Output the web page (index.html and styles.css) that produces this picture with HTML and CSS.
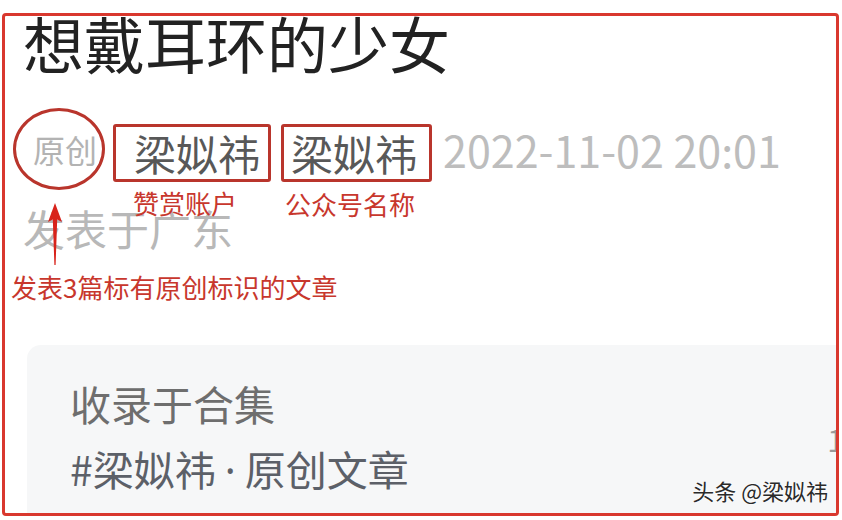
FILE: index.html
```html
<!DOCTYPE html>
<html lang="zh-CN">
<head>
    <meta charset="UTF-8">
    <meta name="viewport" content="width=device-width, initial-scale=1.0">
    <title>想戴耳环的少女</title>
    <link rel="stylesheet" href="styles.css">
</head>
<body>
    <div class="shot">
        <div class="frame">
            <h1 class="title">想戴耳环的少女</h1>

            <div class="meta">
                <span class="original">原创</span>
                <span class="name-box">梁姒祎</span>
                <span class="name-box">梁姒祎</span>
                <span class="date">2022-11-02 20:01</span>
            </div>

            <p class="location">发表于广东</p>
            <p class="note-main">发表3篇标有原创标识的文章</p>

            <!-- annotations drawn over the article -->
            <span class="note note-reward">赞赏账户</span>
            <span class="note note-account">公众号名称</span>
            <svg class="arrow" width="20" height="64" viewBox="0 0 20 64">
                <path d="M10 0 L17 19 L12.2 16.5 L10.6 62 L9.4 62 L7.8 16.5 L3 19 Z" fill="#d8231b"/>
            </svg>

            <div class="album">
                <p class="album-label">收录于合集</p>
                <p class="album-name">#梁姒祎<span class="dot">·</span>原创文章</p>
                <span class="album-count">1</span>
            </div>

            <span class="watermark">头条 @梁姒祎</span>
        </div>
    </div>
</body>
</html>
```

FILE: styles.css
```css
body {
    margin: 0;
    background-color: #fff;
    font-family: "Noto Sans CJK SC", "Noto Sans", sans-serif;
}
p, h1 {
    margin: 0;
}
.shot {
    width: 842px;
    height: 520px;
    padding: 13px 0 0 2px;
    box-sizing: border-box;
    overflow: hidden;
}
.frame {
    position: relative;
    width: 837px;
    height: 503px;
    box-sizing: border-box;
    border: 3px solid #d9382e;
    border-radius: 4px;
    overflow: hidden;
    background-color: #fff;
}
.title {
    height: 60px;
    margin: 0 0 0 18px;
    font-size: 61px;
    line-height: 54px;
    font-weight: normal;
    color: #222;
}
.meta {
    display: flex;
    align-items: center;
    margin: 32px 0 0 8px;
    height: 82px;
}
.original {
    display: flex;
    align-items: center;
    justify-content: center;
    height: 76px;
    width: 74px;
    padding-left: 12px;
    border: 3px solid #b9352c;
    border-radius: 50%;
    font-size: 32px;
    color: #b3b3b3;
}
.name-box {
    display: flex;
    align-items: center;
    justify-content: center;
    height: 52px;
    margin-top: 7px;
    padding: 0 8px 0 18px;
    margin-left: 8px;
    border: 3px solid #b9352c;
    border-radius: 3px;
    font-size: 42px;
    color: #585858;
}
.name-box + .name-box {
    margin-left: 10px;
    padding: 0 12px 0 7px;
}
.date {
    margin-left: 11px;
    font-size: 43px;
    color: #bdbdbd;
}
.location {
    margin: 16px 0 0 18px;
    font-size: 42px;
    line-height: 44px;
    color: #b8b8b8;
}
.note-main {
    margin: 22px 0 0 6px;
    font-size: 26px;
    line-height: 30px;
    color: #c8372d;
}
.note {
    position: absolute;
    font-size: 26px;
    line-height: 28px;
    color: #c8372d;
}
.note-reward {
    left: 128px;
    top: 173px;
}
.note-account {
    left: 280px;
    top: 174px;
}
.arrow {
    position: absolute;
    left: 40px;
    top: 187px;
}
.album {
    position: relative;
    margin: 43px 0 0 22px;
    height: 200px;
    padding: 36px 0 0 43px;
    background-color: #f6f7f8;
    border-radius: 14px 0 0 0;
}
.album-label {
    font-size: 41px;
    line-height: 44px;
    color: #6e6e6e;
}
.album-name {
    margin-top: 21px;
    font-size: 41px;
    line-height: 44px;
    color: #5c6068;
}
.dot {
    font-family: "Noto Sans", sans-serif;
    margin: 0 9px;
}
.album-count {
    position: absolute;
    right: -8px;
    top: 72px;
    font-size: 30px;
    color: #999;
}
.watermark {
    position: absolute;
    right: 8px;
    bottom: 7px;
    font-size: 22px;
    color: #2a2a2a;
    text-shadow: 0 0 2px #fff, 0 0 2px #fff;
}
```
